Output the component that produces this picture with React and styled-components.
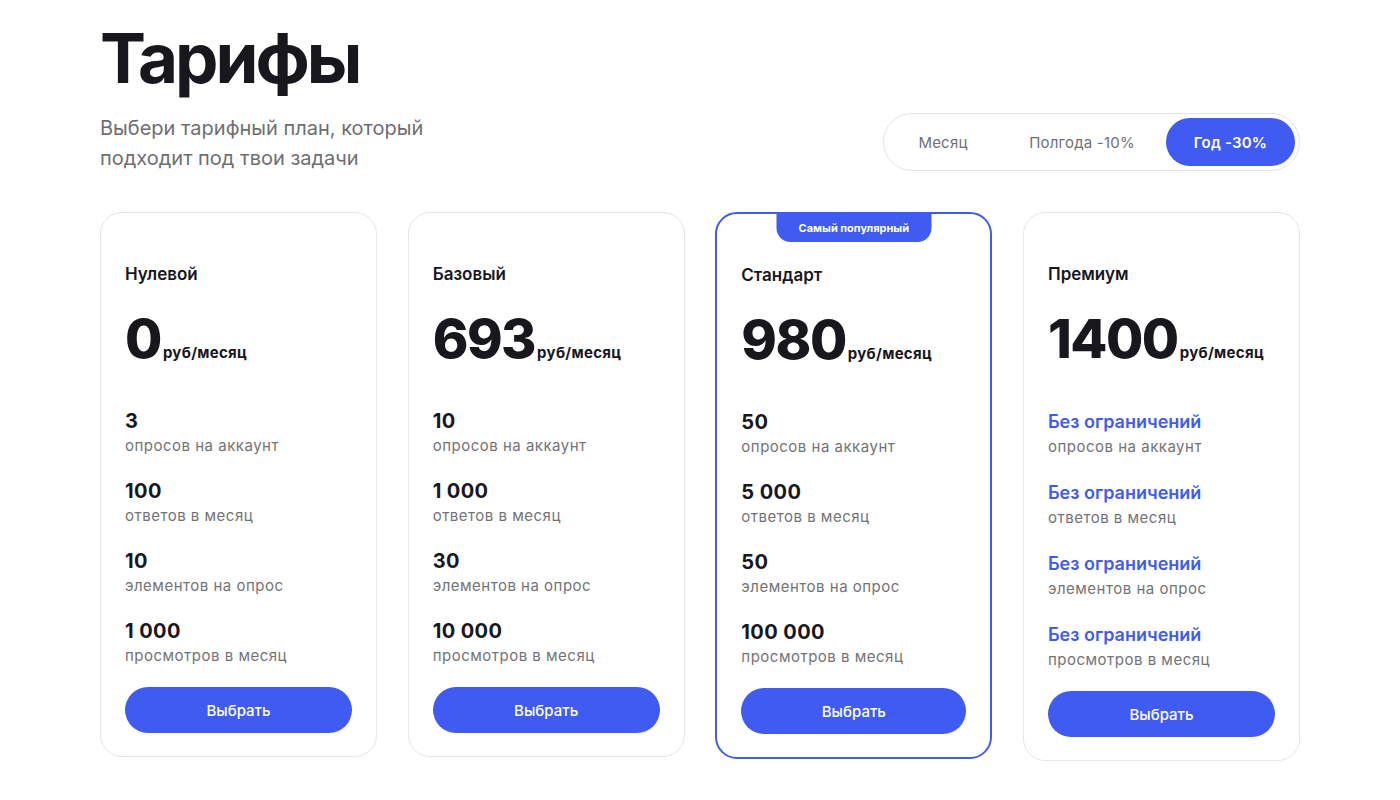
import React, { useState } from "react";
import styled, { createGlobalStyle } from "styled-components";

const Global = createGlobalStyle`
  * { box-sizing: border-box; }
  body { margin: 0; background: #fff; font-family: Inter, "Noto Sans", sans-serif; color: #17161c; }
`;

const Page = styled.div`
  width: 1200px;
  margin: 0 auto;
  padding-top: 16px;
`;

const Title = styled.h1`
  margin: 0;
  font-size: 69px;
  font-weight: 700;
  letter-spacing: -3px;
  line-height: 84px;
  color: #18171d;
`;

const HeaderRow = styled.div`
  display: flex;
  justify-content: space-between;
  align-items: flex-start;
  margin-top: 13px;
`;

const Subtitle = styled.p`
  margin: 0;
  font-size: 20px;
  line-height: 30px;
  color: #6e6e72;
  width: 360px;
`;

const Toggle = styled.div`
  display: flex;
  align-items: center;
  width: 417px;
  height: 58px;
  padding: 4px;
  border: 1px solid #e4e4e7;
  border-radius: 29px;
`;

const ToggleItem = styled.button`
  border: none;
  height: 48px;
  border-radius: 24px;
  background: ${(p) => (p.$active ? "#3f5bf1" : "transparent")};
  color: ${(p) => (p.$active ? "#fff" : "#707074")};
  font-family: Inter, sans-serif;
  font-size: 15px;
  letter-spacing: 0.2px;
  font-weight: ${(p) => (p.$active ? 600 : 400)};
  width: ${(p) => p.$w}px;
  padding: 0;
  cursor: pointer;
`;

const Grid = styled.div`
  display: grid;
  grid-template-columns: repeat(4, 277px);
  justify-content: space-between;
  align-items: start;
  margin-top: 39px;
`;

const Card = styled.div`
  position: relative;
  border: ${(p) => (p.$popular ? "2px solid #3f5bf1" : "1px solid #e6e6ea")};
  border-radius: 22px;
  padding: 49px 24px 23px;
  display: flex;
  flex-direction: column;
`;

const Badge = styled.div`
  position: absolute;
  top: -1px;
  left: 50%;
  transform: translateX(-50%);
  width: 155px;
  height: 29px;
  background: #3f5bf1;
  color: #fff;
  font-size: 11px;
  font-weight: 700;
  display: flex;
  align-items: center;
  justify-content: center;
  border-radius: 0 0 14px 14px;
`;

const PlanName = styled.div`
  font-size: 17px;
  font-weight: 600;
  line-height: 24px;
  color: #18171d;
`;

const PriceRow = styled.div`
  display: flex;
  align-items: baseline;
  margin-top: 25px;
  height: 80px;
`;

const Price = styled.span`
  font-size: 54px;
  font-weight: 800;
  letter-spacing: -1.5px;
  line-height: 56px;
  color: #18171d;
`;

const Unit = styled.span`
  font-size: 15px;
  font-weight: 700;
  letter-spacing: 0.3px;
  color: #18171d;
  margin-left: 2px;
`;

const Features = styled.div`
  display: flex;
  flex-direction: column;
  gap: 20px;
  margin-top: 17px;
`;

const Feature = styled.div`
  display: flex;
  flex-direction: column;
`;

const Value = styled.div`
  font-size: ${(p) => (p.$unlimited ? "18px" : "20px")};
  font-weight: ${(p) => (p.$unlimited ? 600 : 700)};
  letter-spacing: ${(p) => (p.$unlimited ? "0" : "0.4px")};
  line-height: ${(p) => (p.$unlimited ? "27px" : "26px")};
  color: ${(p) => (p.$unlimited ? "#3f5bf1" : "#18171d")};
`;

const Label = styled.div`
  font-size: 15px;
  line-height: 24px;
  color: #737377;
  letter-spacing: 0.5px;
`;

const Button = styled.button`
  margin-top: 19px;
  height: 46px;
  width: 100%;
  border: none;
  border-radius: 23px;
  background: #3f5bf1;
  color: #fff;
  font-family: Inter, sans-serif;
  font-size: 15px;
  font-weight: 500;
  cursor: pointer;
`;

const labels = ["опросов на аккаунт", "ответов в месяц", "элементов на опрос", "просмотров в месяц"];

const plans = [
  { name: "Нулевой", price: "0", values: ["3", "100", "10", "1 000"] },
  { name: "Базовый", price: "693", values: ["10", "1 000", "30", "10 000"] },
  { name: "Стандарт", price: "980", values: ["50", "5 000", "50", "100 000"], popular: true },
  { name: "Премиум", price: "1400", values: null },
];

export default function App() {
  const [period, setPeriod] = useState(2);
  const periods = [
    { label: "Месяц", w: 110 },
    { label: "Полгода -10%", w: 168 },
    { label: "Год -30%", w: 129 },
  ];
  return (
    <>
      <Global />
      <Page>
        <Title>Тарифы</Title>
        <HeaderRow>
          <Subtitle>Выбери тарифный план, который подходит под твои задачи</Subtitle>
          <Toggle>
            {periods.map((p, i) => (
              <ToggleItem key={p.label} $w={p.w} $active={period === i} onClick={() => setPeriod(i)}>
                {p.label}
              </ToggleItem>
            ))}
          </Toggle>
        </HeaderRow>
        <Grid>
          {plans.map((plan) => (
            <Card key={plan.name} $popular={plan.popular}>
              {plan.popular && <Badge>Самый популярный</Badge>}
              <PlanName>{plan.name}</PlanName>
              <PriceRow>
                <Price>{plan.price}</Price>
                <Unit>руб/месяц</Unit>
              </PriceRow>
              <Features>
                {labels.map((l, i) => (
                  <Feature key={l}>
                    <Value $unlimited={!plan.values}>{plan.values ? plan.values[i] : "Без ограничений"}</Value>
                    <Label>{l}</Label>
                  </Feature>
                ))}
              </Features>
              <Button>Выбрать</Button>
            </Card>
          ))}
        </Grid>
      </Page>
    </>
  );
}
